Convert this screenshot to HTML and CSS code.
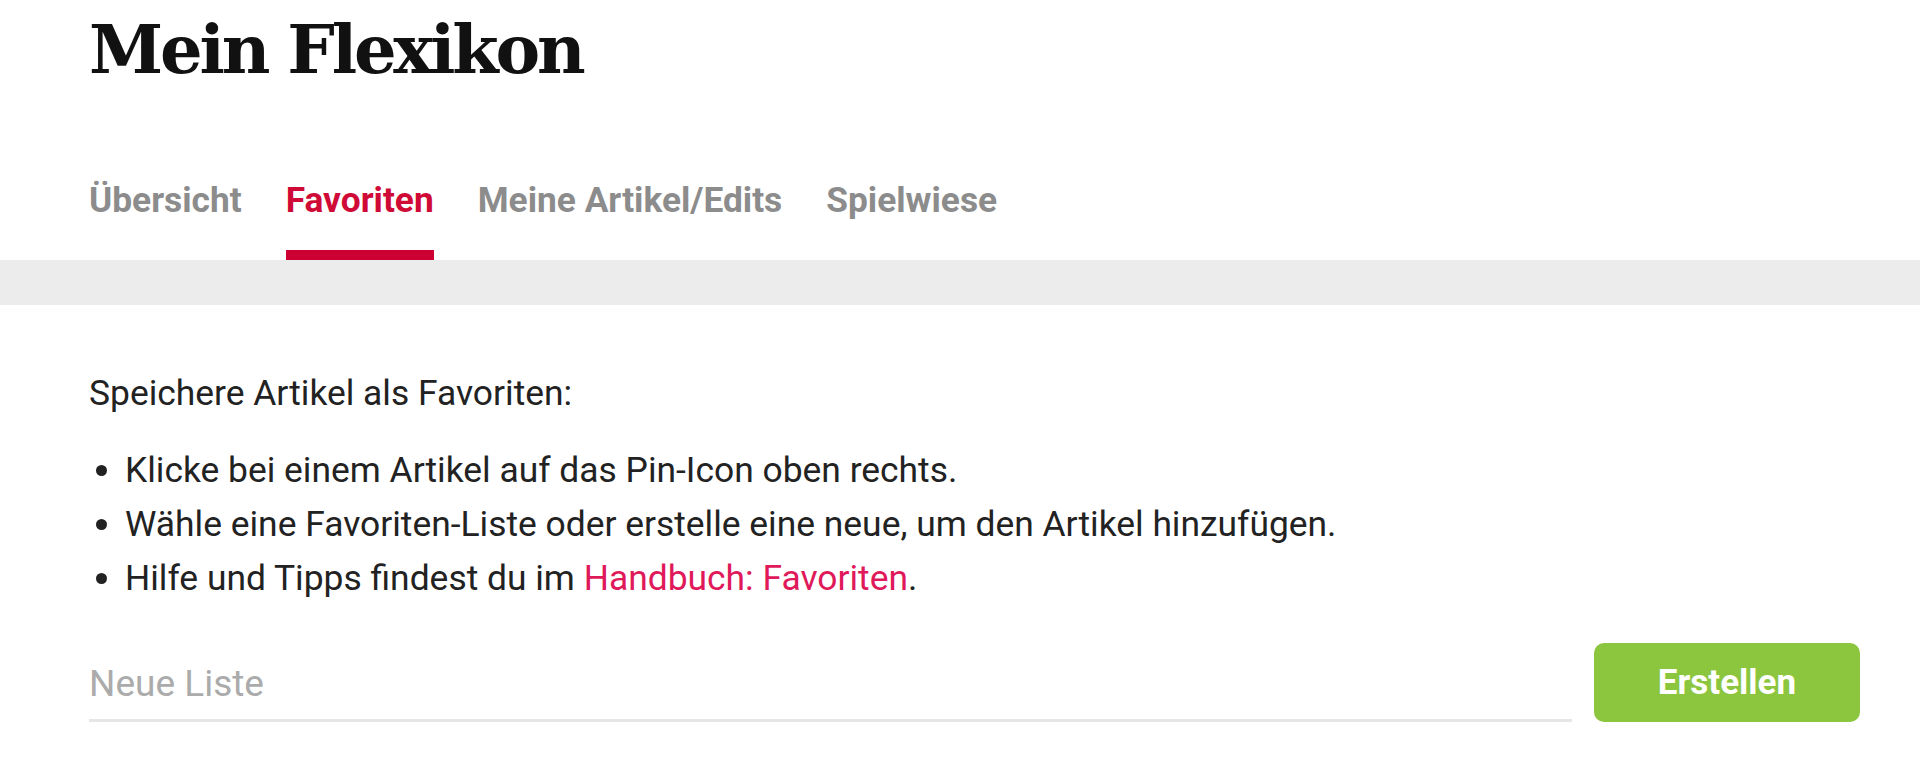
FILE: index.html
```html
<!DOCTYPE html>
<html lang="de">
<head>
  <meta charset="UTF-8" />
  <meta name="viewport" content="width=device-width, initial-scale=1.0" />
  <title>Mein Flexikon</title>
  <link rel="stylesheet" href="styles.css">
</head>
<body>
  <header class="page-head">
    <h1 class="page-title">Mein Flexikon</h1>
    <nav class="tabs">
      <a class="tab" href="#">Übersicht</a>
      <a class="tab active" href="#">Favoriten</a>
      <a class="tab" href="#">Meine Artikel/Edits</a>
      <a class="tab" href="#">Spielwiese</a>
    </nav>
  </header>
  <div class="tabs-bar"></div>
  <main class="content">
    <p class="intro">Speichere Artikel als Favoriten:</p>
    <ul class="tips">
      <li>Klicke bei einem Artikel auf das Pin-Icon oben rechts.</li>
      <li>Wähle eine Favoriten-Liste oder erstelle eine neue, um den Artikel hinzufügen.</li>
      <li>Hilfe und Tipps findest du im <a class="link" href="#">Handbuch: Favoriten</a>.</li>
    </ul>
    <form class="new-list" onsubmit="return false;">
      <input class="new-list-input" type="text" placeholder="Neue Liste">
      <button class="new-list-button" type="submit">Erstellen</button>
    </form>
  </main>
</body>
</html>
```

FILE: styles.css
```css
body {
  margin: 0;
  padding: 0;
  font-family: Roboto, "Noto Sans", sans-serif;
  color: #222;
  background-color: #fff;
}

.page-head {
  padding: 0 60px 0 89px;
}

.page-title {
  margin: 10px 0 0;
  font-family: "DejaVu Serif", "Liberation Serif", serif;
  font-weight: 700;
  font-size: 67px;
  line-height: 80px;
  letter-spacing: -3.2px;
  color: #111;
}

.tabs {
  display: flex;
  gap: 44px;
  margin-top: 90px;
}

.tab {
  display: block;
  font-size: 35.3px;
  font-weight: 700;
  line-height: 41px;
  color: #8c8c8c;
  text-decoration: none;
  padding-bottom: 29px;
  border-bottom: 10px solid transparent;
}

.tab.active {
  color: #cf0a36;
  border-bottom-color: #cc0033;
}

.tabs-bar {
  height: 45px;
  background-color: #ececec;
}

.content {
  padding: 0 60px 0 89px;
}

.intro {
  margin: 66px 0 0;
  font-size: 35.4px;
  line-height: 44px;
}

.tips {
  margin: 28px 0 0;
  padding-left: 36px;
  font-size: 35.4px;
  line-height: 54px;
}

.link {
  color: #e0195a;
  text-decoration: none;
}

.new-list {
  display: flex;
  gap: 22px;
  margin-top: 38px;
}

.new-list-input {
  flex: 1;
  height: 79px;
  box-sizing: border-box;
  margin: 0;
  padding: 4px 0 0;
  border: none;
  border-bottom: 3px solid #e6e6e6;
  font-family: Roboto, sans-serif;
  font-size: 37px;
  color: #222;
  outline: none;
}

.new-list-input::placeholder {
  color: #ababab;
}

.new-list-button {
  width: 266px;
  height: 79px;
  border: none;
  border-radius: 10px;
  background-color: #8cc63e;
  color: #fff;
  font-family: Roboto, sans-serif;
  font-size: 35px;
  font-weight: 700;
  cursor: pointer;
}
```
